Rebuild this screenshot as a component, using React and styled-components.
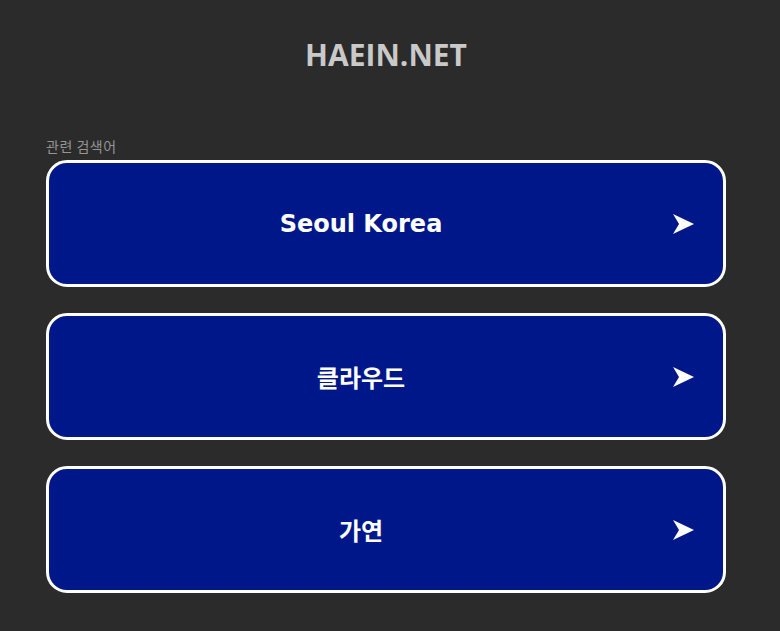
import React from 'react';
import styled, { createGlobalStyle } from 'styled-components';

const GlobalStyle = createGlobalStyle`
    body {
        margin: 0;
        background-color: #2b2b2b;
        font-family: "DejaVu Sans", "Noto Sans CJK KR", sans-serif;
    }
`;

const Page = styled.div`
    padding: 0 54px 0 46px;
`;

const Header = styled.header`
    height: 108px;
    display: flex;
    align-items: center;
    justify-content: center;
`;

const Title = styled.h1`
    margin: 0;
    font-family: "Open Sans", "DejaVu Sans", sans-serif;
    font-size: 30px;
    font-weight: 700;
    color: #c9c9c9;
`;

const Label = styled.div`
    margin-top: 28px;
    font-family: "Noto Sans CJK KR", sans-serif;
    font-size: 14px;
    letter-spacing: 0.5px;
    line-height: 20px;
    color: #959595;
`;

const List = styled.div`
    margin-top: 4px;
    display: flex;
    flex-direction: column;
    gap: 26px;
`;

const Card = styled.a`
    box-sizing: border-box;
    height: 127px;
    display: flex;
    align-items: center;
    padding-right: 29px;
    border: 3px solid #ffffff;
    border-radius: 21px;
    background-color: #001789;
    text-decoration: none;
    cursor: pointer;
`;

const CardText = styled.span`
    flex: 1;
    text-align: center;
    font-family: "DejaVu Sans", "Noto Sans CJK KR", sans-serif;
    font-size: 24px;
    font-weight: 700;
    color: #ffffff;
`;

const Arrow = () => (
    <svg width="21" height="20" viewBox="0 0 21 20">
        <path d="M0 0 L21 10 L0 20 L6 10 Z" fill="#ffffff" />
    </svg>
);

const keywords = ['Seoul Korea', '클라우드', '가연'];

const App = () => {
    return (
        <>
            <GlobalStyle />
            <Page>
                <Header>
                    <Title>HAEIN.NET</Title>
                </Header>
                <Label>관련 검색어</Label>
                <List>
                    {keywords.map((k) => (
                        <Card key={k}>
                            <CardText>{k}</CardText>
                            <Arrow />
                        </Card>
                    ))}
                </List>
            </Page>
        </>
    );
};

export default App;
